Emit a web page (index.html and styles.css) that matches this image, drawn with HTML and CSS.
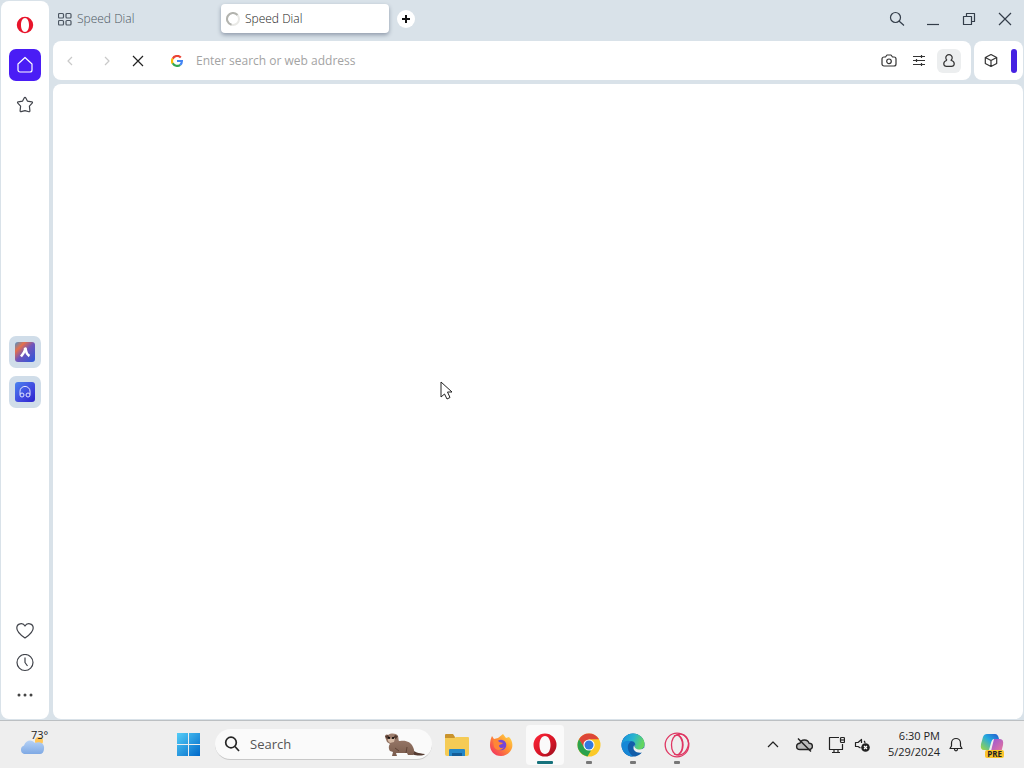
FILE: index.html
```html
<!DOCTYPE html>
<html lang="en">
<head>
<meta charset="utf-8">
<title>Speed Dial</title>
<link rel="stylesheet" href="styles.css">
</head>
<body>
<div class="browser">
  <nav class="sidebar" aria-label="Sidebar">
    <div class="side-group">
      <button class="side-btn" aria-label="Opera menu"><svg width="18" height="18" viewBox="0 0 18 18"><path fill="#e8142b" fill-rule="evenodd" d="M9 .8a8.2 8.2 0 1 0 0 16.4A8.2 8.2 0 0 0 9 .8zM9 2c2.500 0 4 3 4 7s-1.500 7-4 7-4-3-4-7 1.500-7 4-7z"/></svg></button>
      <button class="side-btn home" aria-label="Home"><svg class="line" width="18" height="18" viewBox="0 0 18 18"><path d="M2 8 9 1.500 16 8v6a2 2 0 0 1-2 2H4a2 2 0 0 1-2-2z"/></svg></button>
      <button class="side-btn" aria-label="Bookmarks"><svg class="line" width="18" height="18" viewBox="0 0 18 18"><path d="M9 1.300q.5 0 .8.6l1.600 3.200 4.300.7q1.300.3.500 1.300l-2.800 3 .5 4.700q0 1.200-1 .9L9 14.600l-3.900 1.100q-1 .3-1-.9l.5-4.700-2.800-3q-.8-1 .5-1.300l4.300-.7 1.600-3.200q.3-.6.800-.6z"/></svg></button>
    </div>
    <div class="side-group apps">
      <button class="side-btn app" aria-label="Aria"><svg width="20" height="20" viewBox="0 0 20 20"><defs><linearGradient id="aria" x1="0" y1="0" x2="1" y2="1"><stop stop-color="#4a92c9"/><stop offset=".25" stop-color="#e5704c"/><stop offset=".5" stop-color="#7155ba"/><stop offset="1" stop-color="#2856dd"/></linearGradient></defs><rect width="20" height="20" rx="3" fill="url(#aria)"/><path d="M10 5.500q1 3-4 9M10.500 6q.5 6 4 8" fill="none" stroke="#fff" stroke-width="2.600"/></svg></button>
      <button class="side-btn app" aria-label="Player"><svg width="20" height="20" viewBox="0 0 20 20"><defs><linearGradient id="player" x1="0" y1="0" x2="1" y2="1"><stop stop-color="#4a83ef"/><stop offset=".6" stop-color="#4046df"/><stop offset="1" stop-color="#2921cc"/></linearGradient></defs><rect width="20" height="20" rx="3" fill="url(#player)"/><g fill="none" stroke="#e3e5ff"><path d="M5 12.500V9.200a5 4.800 0 0 1 10 0v3.300"/><circle cx="7" cy="13" r="2"/><circle cx="13" cy="13" r="2"/></g></svg></button>
    </div>
    <div class="side-group bottom">
      <button class="side-btn" aria-label="Favourites"><svg class="line" width="18" height="18" viewBox="0 0 18 18"><path d="M9 16C3 12 .8 9.500.8 6 .8 1.300 7 .2 9 4c2-3.800 8.200-2.700 8.200 2 0 3.500-2.200 6-8.200 10z"/></svg></button>
      <button class="side-btn" aria-label="History"><svg class="line" width="18" height="18" viewBox="0 0 18 18"><circle cx="9" cy="8.500" r="8"/><path d="M9 3.500v5l2.500 3.500"/></svg></button>
      <button class="side-btn" aria-label="More"><svg width="18" height="18" viewBox="0 0 18 18" fill="#444"><circle cx="3" cy="9" r="1.500"/><circle cx="9" cy="9" r="1.500"/><circle cx="15" cy="9" r="1.500"/></svg></button>
    </div>
  </nav>
  <div class="main">
    <header class="tabs">
      <button class="tab"><svg class="line" width="14" height="14" viewBox="0 0 14 14"><rect x=".5" y="1.500" width="5" height="4.500" rx="1"/><rect x="8" y="1.500" width="5" height="4.500" rx="1"/><rect x=".5" y="8.500" width="5" height="4.500" rx="1"/><rect x="8" y="8.500" width="5" height="4.500" rx="1"/></svg><span>Speed Dial</span></button>
      <button class="tab active"><svg width="14" height="14" viewBox="0 0 14 14" fill="none" stroke-width="2"><circle cx="7" cy="7" r="6" stroke="#e9e9e6"/><path d="M11.500 3A6 6 0 1 0 5.500 12.800" stroke="#b2b3ae"/></svg><span>Speed Dial</span></button>
      <button class="new-tab" aria-label="New tab"><svg width="10" height="10" viewBox="0 0 10 10" stroke="#111" stroke-width="2"><path d="M5 1v8M1 5h8"/></svg></button>
      <div class="window-controls">
        <button aria-label="Search tabs"><svg class="line" width="16" height="16" viewBox="0 0 16 16"><circle cx="6.500" cy="6.500" r="5"/><path d="m10 10 5 4.500"/></svg></button>
        <button aria-label="Minimize"><svg class="line" width="16" height="16" viewBox="0 0 16 16"><path d="M2 13.500h12"/></svg></button>
        <button aria-label="Restore"><svg class="line" width="16" height="16" viewBox="0 0 16 16"><path d="M2.500 5.500h8v8h-8zM5.500 5V2.500h8v8H11"/></svg></button>
        <button aria-label="Close"><svg class="line" width="16" height="16" viewBox="0 0 16 16"><path d="m2 2 12 12M14 2 2 14"/></svg></button>
      </div>
    </header>
    <div class="toolbar">
      <form class="address">
        <button type="button" class="nav faded" aria-label="Back"><svg class="line" width="14" height="14" viewBox="0 0 14 14"><path d="M8 3 4 7l4 4"/></svg></button>
        <button type="button" class="nav faded" aria-label="Forward"><svg class="line" width="14" height="14" viewBox="0 0 14 14"><path d="m5 3 4 4-4 4"/></svg></button>
        <button type="button" class="nav stop" aria-label="Stop"><svg class="line" width="14" height="14" viewBox="0 0 14 14"><path d="m1 2 10 10M11 2 1 12"/></svg></button>
        <svg class="google" width="12" height="12" viewBox="0 0 12 12" fill="none" stroke-width="2.200"><path d="M9.800 2.500A5 5 0 0 0 1.700 3.700" stroke="#ea4335"/><path d="M1.700 3.500a5 5 0 0 0 0 5" stroke="#fbbc05"/><path d="M1.700 8.300a5 5 0 0 0 7.500 1.500" stroke="#34a853"/><path d="M6 6h4.900q0 2.500-1.700 3.800" stroke="#4285f4"/></svg>
        <input class="url" type="text" aria-label="Address" placeholder="Enter search or web address">
        <button type="button" class="tool" aria-label="Snapshot"><svg class="line" width="16" height="16" viewBox="0 0 16 16"><path d="M3 4h1.500L6 2h4l1.500 2H13a2 2 0 0 1 2 2v5a2 2 0 0 1-2 2H3a2 2 0 0 1-2-2V6a2 2 0 0 1 2-2z"/><circle cx="8" cy="8.300" r="2.300"/></svg></button>
        <button type="button" class="tool" aria-label="Easy setup"><svg class="line" width="16" height="16" viewBox="0 0 16 16"><path d="M2 3.500h12M2 7.500h12M2 11.500h12M10.500 2v3M5.500 6v3M10.500 10v3"/></svg></button>
        <button type="button" class="tool profile" aria-label="Profile"><svg class="line" width="16" height="16" viewBox="0 0 16 16"><path d="M6 7.300a3.200 3.200 0 1 1 4 0c5 1.700 3.500 6 .5 6h-5c-3 0-4.500-4.300.5-6"/></svg></button>
      </form>
      <div class="extensions">
        <button class="tool" aria-label="Extensions"><svg class="line" width="16" height="16" viewBox="0 0 16 16"><path d="m8 1.500 5.700 3v6L8 13.500l-5.700-3v-6zM2.300 4.500l5.700 3 5.700-3M8 7.500v6"/></svg></button>
        <span class="accent"></span>
      </div>
    </div>
    <main class="page"></main>
  </div>
</div>
<footer class="taskbar">
  <button class="weather" aria-label="Weather"><svg width="28" height="20" viewBox="0 0 28 20"><defs><linearGradient id="cloud" x1="0" y1="0" x2="0" y2="1"><stop stop-color="#b6d2f6"/><stop offset="1" stop-color="#7fa9e4"/></linearGradient></defs><circle cx="19" cy="6" r="4" fill="#ffc65a"/><path fill="url(#cloud)" d="M4 19a4.500 4.500 0 0 1 0-8.500c2-6 8-6.500 11-2.500 5-2 10 1 9 6 0 3-2 5-4 5z"/></svg><span>73°</span></button>
  <button class="task" aria-label="Start"><svg width="24" height="24" viewBox="0 0 24 24"><defs><linearGradient id="win" x1="0" y1="0" x2="1" y2="1"><stop stop-color="#54cdf7"/><stop offset="1" stop-color="#0068c9"/></linearGradient></defs><path fill="url(#win)" d="M1 0h11v11H1zM13 0h11v11H13zM1 12h11v11H1zM13 12h11v11H13z"/></svg></button>
  <label class="search">
    <svg width="16" height="16" viewBox="0 0 16 16" fill="none" stroke="#252525" stroke-width="1.700"><circle cx="7" cy="6.500" r="5.300"/><path d="m11 10.500 4 4.500"/></svg>
    <input type="text" aria-label="Search" placeholder="Search">
    <svg width="42" height="26" viewBox="0 0 42 26"><defs><linearGradient id="fur" x1="0" y1="0" x2="0" y2="1"><stop stop-color="#a08070"/><stop offset="1" stop-color="#7a5c4d"/></linearGradient></defs><path fill="#553c32" d="M27 17c4 5 7 5 14 6-2 2.500-13 2.500-17-3z"/><path fill="url(#fur)" d="M1 6C1 4 2 3 4 4c3-2 8-2 10 1 1 4 0 5 2 5 6-1 11 1 13 6 2 4 1 6 0 8h-5l-1-2H12l1 3H8l1-4-3-1C4 17 5 14 6 13L3 11z"/><path fill="#553c32" d="m1 5 3-1 2 3-3 1zM11 4l3 1-2 3-3-1z"/><path fill="#d5b9a4" d="m4 7 4 1 3-1-1 4-4 1-2-2z"/><circle cx="5" cy="7" r="1"/><circle cx="9" cy="7" r="1"/><path stroke="#604437" fill="none" d="m11 17 4 3m8-4-1 6"/></svg>
  </label>
  <button class="task" aria-label="File Explorer"><svg width="26" height="24" viewBox="0 0 26 24"><path fill="#c9932d" d="M1 2q0-1 1-1h7l2 3v4H1z"/><path fill="#f5cb55" d="M1 5h9l2-1h12q1 0 1 1v16q0 2-2 2H3q-2 0-2-2z"/><path fill="#2487c8" d="M5 23v-6q0-1 1-1h14q1 0 1 1v6z"/><path fill="#145d98" d="M8 20h10v3H8z"/></svg></button>
  <button class="task" aria-label="Firefox"><svg width="24" height="24" viewBox="0 0 24 24"><defs><linearGradient id="fox" x1="1" y1="0" x2="0" y2="1"><stop stop-color="#ffe34a"/><stop offset=".45" stop-color="#ff9132"/><stop offset="1" stop-color="#f12068"/></linearGradient></defs><path fill="url(#fox)" d="M3 3 5 6l4-1 5-4 3 4 3-1c3 3 4 7 3 11-2 5-6 8-11 8C5 23 1 18 1 12c0-4 1-7 2-9z"/><circle cx="12" cy="12" r="5.300" fill="#7545d8"/><path fill="#ff8736" d="M4 7c3-1 5 0 6 2l4 1c-1 2-4 1-4 3 1 3 4 2 5 1-2 4-8 4-10 0z"/></svg></button>
  <button class="task current running" aria-label="Opera"><svg width="24" height="24" viewBox="0 0 24 24"><defs><linearGradient id="opera" x1="0" y1="0" x2="1" y2="1"><stop stop-color="#ff2739"/><stop offset=".6" stop-color="#d31425"/><stop offset="1" stop-color="#961220"/></linearGradient></defs><path fill="url(#opera)" fill-rule="evenodd" d="M12 .5a11.500 11.500 0 1 0 0 23 11.500 11.500 0 0 0 0-23zM12 3c3.500 0 5.500 4 5.500 9s-2 9-5.500 9-5.500-4-5.500-9 2-9 5.500-9z"/></svg></button>
  <button class="task running" aria-label="Chrome"><svg width="24" height="24" viewBox="0 0 24 24"><circle cx="12" cy="12" r="11.500" fill="#fbc928"/><path fill="#dd4638" d="M2 6.300A11.500 11.500 0 0 1 22 6.300H12L7 15z"/><path fill="#2ba24c" d="M2 6.300 7.500 15 14 17.500l-3.500 5.900A11.500 11.500 0 0 1 2 6.300z"/><circle cx="12" cy="12" r="5.600" fill="#fff"/><circle cx="12" cy="12" r="4.500" fill="#3379df"/></svg></button>
  <button class="task running" aria-label="Edge"><svg width="24" height="24" viewBox="0 0 24 24"><defs><linearGradient id="edge" x1="0" y1="0" x2="1" y2=".3"><stop stop-color="#168be0"/><stop offset=".55" stop-color="#28b5cf"/><stop offset="1" stop-color="#62d560"/></linearGradient></defs><circle cx="12" cy="12" r="11.500" fill="#125da9"/><path fill="url(#edge)" d="M.5 12C1 5 6 .5 12 .5S23.500 5 23.500 11c0 4-3 6-7 6-3 0-4-1-3-3 2-3 0-6-4-6-3 0-7 1-9 4z"/><path fill="#1687d6" d="M.5 12C2 8 7 7 10 8.500 5 11 6 19 12 23.400 5 23.400.5 18 .5 12z"/><path fill="#efefef" d="M13.500 11.500c-1 3 2 5 5 5 2 0 4-1 4.500-2 .5 3-1 5-2 5-5 1-11-2-7.500-8z"/></svg></button>
  <button class="task running" aria-label="Opera GX"><svg width="26" height="26" viewBox="0 0 26 26" fill="none" stroke="#df3662" stroke-width="1.300"><circle cx="13" cy="13" r="11.800"/><ellipse cx="13" cy="13" rx="5.500" ry="9.800"/><path d="M10 4c12-6 17 5 13 13-3 6-8 7-13 5M15 3.500c3 2 4 5 4 9.500s-1 7-4 9"/></svg></button>
  <div class="tray">
    <button aria-label="Hidden icons"><svg class="line" width="16" height="16" viewBox="0 0 16 16"><path d="m4 10 5-5 5 5"/></svg></button>
    <button aria-label="OneDrive"><svg class="line" width="18" height="16" viewBox="0 0 18 16"><path fill="#bbb" stroke-width="1.400" d="M5 12.500c-4.500 0-4.500-6 0-6.300 1-4.500 8-4 9 0 4.500 0 4.500 6.300 0 6.300z"/><path stroke-width="1.500" d="m3 1.500 13 13"/></svg></button>
    <button aria-label="Network"><svg class="line" width="18" height="18" viewBox="0 0 18 18"><path d="M12 1.500H2.500v12h13V8M7 14v2.500m4-2.500v2.500M5 16.500h8"/><rect x="13.500" y="1.500" width="4" height="5" rx="1"/><path d="M13.500 4h4"/></svg></button>
    <button class="sound" aria-label="Sound"><svg class="line" width="16" height="16" viewBox="0 0 16 16"><path d="M6.500 11 4 9.500H1.500v-4H4l3.500-3V6M10 4q1 .8 1 2"/><circle cx="11.500" cy="10.500" r="4.300" fill="#222" stroke="none"/><path stroke="#fff" d="m10 9 3 3m0-3-3 3"/></svg></button>
    <div class="clock"><span>6:30 PM</span><span>5/29/2024</span></div>
    <button aria-label="Notifications"><svg class="line" width="16" height="16" viewBox="0 0 16 16"><path d="M2 11.500h12L12.500 9V6c0-6-9-6-9 0v3zM6.500 12c0 2.500 3 2.500 3 0"/></svg></button>
    <button class="copilot" aria-label="Copilot"><svg width="24" height="24" viewBox="0 0 24 24"><defs><linearGradient id="cop-a" x1="1" y1="0" x2="0" y2="1"><stop stop-color="#2458ce"/><stop offset=".45" stop-color="#25aadf"/><stop offset="1" stop-color="#a6d83b"/></linearGradient><linearGradient id="cop-b" x1="0" y1="0" x2="1" y2="1"><stop stop-color="#8b52df"/><stop offset="1" stop-color="#f37994"/></linearGradient></defs><path fill="url(#cop-a)" d="M7 1h8q3 0 4 5h-5q-2 0-3 4l-2 7H4q-4 0-3-6l2-7q1-3 4-3z"/><path fill="url(#cop-b)" d="M14 6h6q4 0 3 6l-2 8H8q3 0 4-6z"/></svg><span class="badge">PRE</span></button>
  </div>
</footer>
<svg class="cursor" width="14" height="21" viewBox="0 0 14 21"><path fill="#fff" stroke="#222" d="M1 1v15l3.500-3L7 18l3-1.500L7.500 11H12z"/></svg>
</body>
</html>
```

FILE: styles.css
```css
* { box-sizing: border-box; }
body {
  margin: 0;
  height: 100vh;
  display: flex;
  flex-direction: column;
  font: 12px/16px "Open Sans", "Noto Sans", sans-serif;
  color: #333a42;
  background: #d9e2e9;
  overflow: hidden;
}
button {
  display: flex;
  align-items: center;
  justify-content: center;
  padding: 0;
  border: 0;
  background: none;
  font: inherit;
  color: inherit;
}
input {
  min-width: 0;
  flex: 1;
  padding: 0;
  border: 0;
  outline: 0;
  background: none;
  font: inherit;
}
svg { display: block; flex: none; }
.line { fill: none; stroke: currentColor; stroke-width: 1.200; stroke-linejoin: round; }

.browser { flex: 1; min-height: 0; display: flex; gap: 4px; padding: 0 1px; }
.sidebar {
  width: 48px;
  margin: 1px 0;
  padding: 8px;
  display: flex;
  flex-direction: column;
  justify-content: space-between;
  background: #fff;
  border-radius: 8px;
}
.side-group { display: flex; flex-direction: column; gap: 8px; }
.side-btn { width: 32px; height: 32px; border-radius: 7px; color: #40434a; }
.home { background: #4a1df5; color: #fff; }
.apps { padding-top: 8px; }
.app { background: #d0dde9; }
.bottom { gap: 0; }

.main { flex: 1; min-width: 0; display: flex; flex-direction: column; }
.tabs { height: 41px; padding-top: 4px; display: flex; align-items: flex-start; }
.tab {
  width: 168px;
  height: 29px;
  padding: 0 5px;
  justify-content: flex-start;
  gap: 5px;
  border-radius: 4px;
  color: #4c5662;
  font-weight: 300;
}
.active { background: #fff; color: #222; box-shadow: 0 2px 4px #8f9aaa; }
.new-tab { width: 18px; height: 18px; margin: 6px 8px; border-radius: 50%; background: #fff; }
.window-controls { margin-left: auto; display: flex; color: #333d49; }
.window-controls button { width: 36px; height: 30px; }

.toolbar { height: 39px; display: flex; gap: 3px; }
.address {
  flex: 1;
  min-width: 0;
  display: flex;
  align-items: center;
  padding-right: 7px;
  background: #fff;
  border-radius: 8px;
}
.nav { width: 36px; height: 32px; }
.faded { color: #c9c9c9; }
.stop { width: 28px; color: #222; }
.google { margin: 0 13px 0 18px; }
.url { height: 24px; }
.url::placeholder { color: #a3a3a3; opacity: 1; }
.tool { width: 24px; height: 24px; margin: 0 3px; border-radius: 6px; color: #333; }
.profile { background: #eceeef; }
.extensions {
  display: flex;
  align-items: center;
  gap: 5px;
  padding: 0 6px 0 2px;
  background: #fff;
  border-radius: 8px;
}
.accent { width: 6px; height: 24px; border-radius: 3px; background: #4522e2; }
.page { flex: 1; margin: 4px 0 1px; background: #fff; border-radius: 8px; }

.taskbar {
  height: 48px;
  display: flex;
  align-items: center;
  background: #eee;
  border-top: 1px solid #bcc0c3;
  color: #222;
}
.weather { position: relative; width: 146px; height: 44px; margin-left: 20px; justify-content: flex-start; }
.weather span { position: absolute; left: 11px; top: 4px; font-size: 11px; }
.task { position: relative; width: 44px; height: 40px; border-radius: 4px; }
.search {
  width: 217px;
  height: 31px;
  margin: 0 3px 0 5px;
  padding: 0 6px 0 9px;
  display: flex;
  align-items: center;
  gap: 10px;
  background: #fafafa;
  border-radius: 16px;
  border-bottom: 1px solid #c8c8c8;
  font-size: 13px;
}
.search input::placeholder { color: #555; opacity: 1; }
.current { background: #fafafa; width: 38px; margin: 0 3px; }
.running::after {
  content: "";
  position: absolute;
  left: calc(50% - 3px);
  bottom: 1px;
  width: 6px;
  height: 3px;
  border-radius: 1px;
  background: #777;
}
.current::after { left: calc(50% - 8px); width: 16px; background: #16727c; }
.tray { margin-left: auto; padding-right: 14px; display: flex; align-items: center; }
.tray button { width: 32px; height: 36px; }
.tray .sound { width: 20px; }
.clock { width: 68px; padding-bottom: 1px; display: flex; flex-direction: column; text-align: right; font-size: 11px; }
.tray .copilot { position: relative; width: 36px; margin-left: 2px; }
.badge {
  position: absolute;
  right: 6px;
  bottom: 5px;
  padding: 0 2px;
  font: bold 8px/8px "Open Sans", sans-serif;
  background: #fbc42b;
  border-radius: 2px;
}
.cursor { position: absolute; left: 440px; top: 381px; }
```
